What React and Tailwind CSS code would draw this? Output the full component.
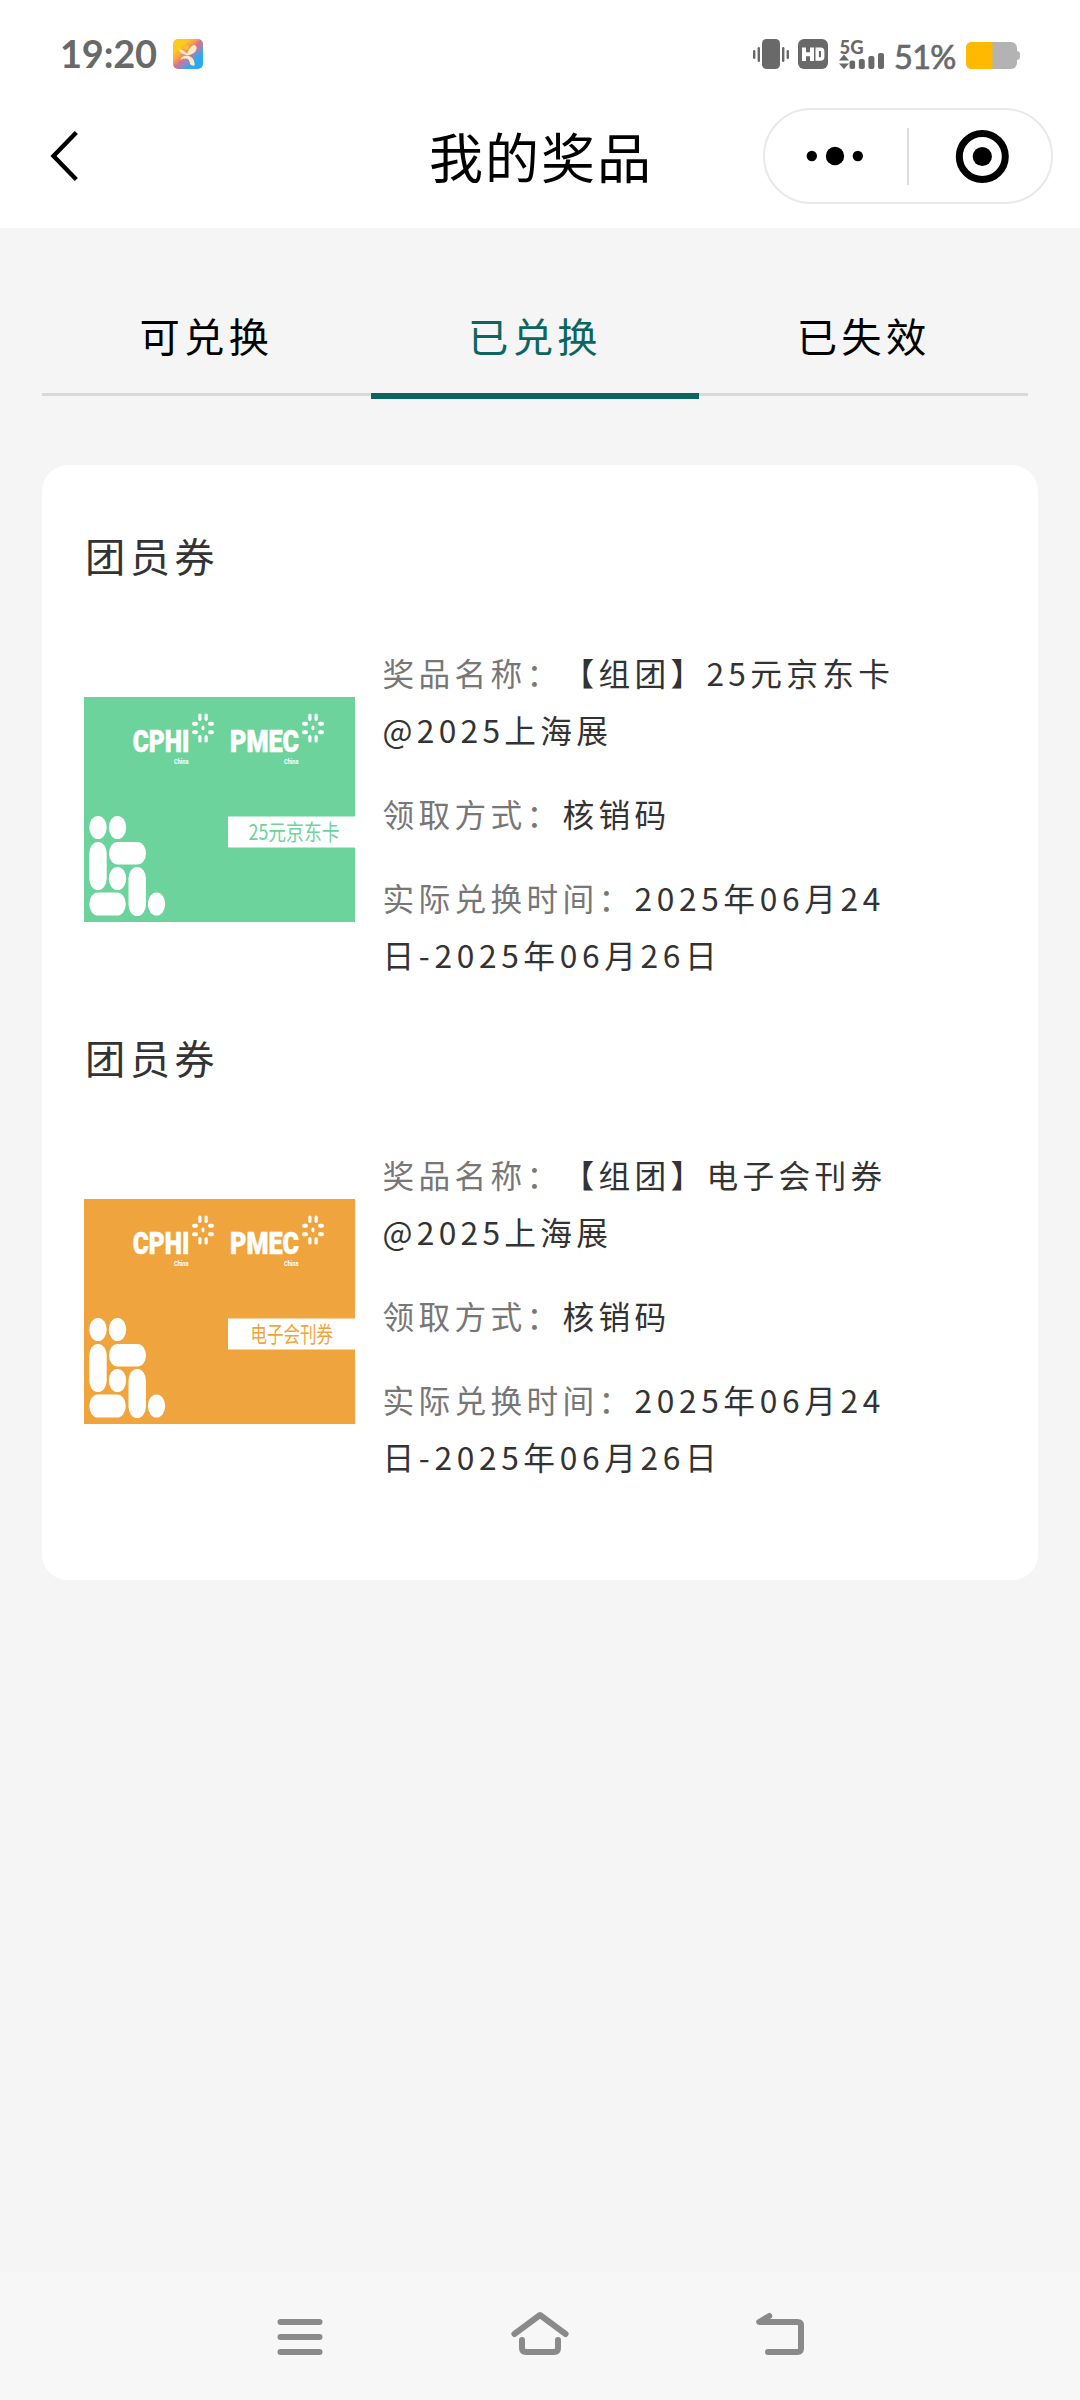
import React from 'react';

const tabs = [
  { key: 'available', label: '可兑换' },
  { key: 'redeemed', label: '已兑换' },
  { key: 'expired', label: '已失效' }
];

const prizes = [
  {
    title: '团员券',
    cover: '25元京东卡',
    color: '#6dd39c',
    coverX: 164.5,
    coverWidth: 91,
    name: '【组团】25元京东卡@2025上海展',
    method: '核销码',
    time: '2025年06月24日-2025年06月26日'
  },
  {
    title: '团员券',
    cover: '电子会刊券',
    color: '#efa43d',
    coverX: 166.5,
    coverWidth: 82.5,
    name: '【组团】电子会刊券@2025上海展',
    method: '核销码',
    time: '2025年06月24日-2025年06月26日'
  }
];

function StatusIcons() {
  return (
    <svg className="overflow-visible" width="132" height="32" viewBox="0 0 132 32" fill="#696969">
      {/* Vibrate */}
      <rect x="0" y="11" width="2.4" height="9" rx="1.2" />
      <rect x="4.6" y="8" width="2.4" height="15" rx="1.2" />
      <rect x="9" y="0" width="18" height="30" rx="4.5" />
      <rect x="29" y="8" width="2.4" height="15" rx="1.2" />
      <rect x="33.6" y="11" width="2.4" height="9" rx="1.2" />
      {/* HD */}
      <rect x="45" y="0" width="30" height="30" rx="6" />
      <path d="M51 8.5V22M59 8.5V22M51 15.2H59" stroke="#fff" strokeWidth="4" fill="none" />
      <path d="M64.2 10.2H67.5Q69.7 10.2 69.7 12.5V18Q69.7 20 67.5 20H64.2Z" stroke="#fff" strokeWidth="3.4" fill="none" />
      {/* 5G signal */}
      <text x="86.5" y="14.5" fontSize="19.5" fontWeight="900" textLength="24" lengthAdjust="spacingAndGlyphs" fontFamily="Lato, sans-serif">5G</text>
      <path d="M91 15.5L96 21.5H86ZM91 30L86 24.5H96Z" />
      <rect x="96.5" y="21.5" width="5.6" height="8.5" rx="2" />
      <rect x="105.8" y="20" width="6" height="10" rx="2" />
      <rect x="115.4" y="17" width="6" height="13" rx="2" />
      <rect x="125" y="14" width="6" height="16" rx="2" />
    </svg>
  );
}

function AppIcon() {
  return (
    <svg width="30" height="30" viewBox="0 0 30 30">
      <defs>
        <linearGradient id="app" x1="0" y1="0" x2="1" y2="1">
          <stop offset="0.25" stopColor="#fdc91c" />
          <stop offset="0.4" stopColor="#f79a4f" />
          <stop offset="0.5" stopColor="#d9708f" />
          <stop offset="0.62" stopColor="#8a8cc8" />
          <stop offset="0.74" stopColor="#2aaaf0" />
        </linearGradient>
      </defs>
      <rect width="30" height="30" rx="5" fill="url(#app)" />
      <path d="M6 10.5C9 10.500 11.500 12 14 14.5C15.5 11 17.5 7 21 6C24 6 24.5 10 22 13C19.5 15.5 16 16.5 13 16C9 15 6 13 6 10.5Z" fill="#fdebc4" />
      <circle cx="13.7" cy="8.500" r="2.4" fill="#fdba3c" />
      <path d="M7 20.5C9 17 14 15.5 17 17.5C20.5 19 21.5 22 21.8 26C20.5 27.5 17.5 26.5 17 24.5C16.5 21.5 15.5 20 13 19.5C11 19.5 9 20.5 7 20.5Z" fill="#fdebc4" />
    </svg>
  );
}

function StatusBar() {
  return (
    <div className="flex h-[96px] items-start justify-between px-[60px] text-[#696969]">
      <div className="flex items-start pt-[39px]">
        <span className="w-[113px] font-[Lato,sans-serif] text-[38px] leading-[29px] font-bold tracking-[-0.2px]">19:20</span>
        <AppIcon />
      </div>
      <div className="flex items-start pt-[39px]">
        <StatusIcons />
        <span className="ml-[9px] w-[72px] pt-[3px] font-[Lato,sans-serif] text-[32.5px] leading-[30px] tracking-[-0.7px] [-webkit-text-stroke:0.7px_#696969]">51%</span>
        <svg className="mt-[3px]" width="54" height="28" viewBox="0 0 54 28">
          <rect x="46" y="9" width="8" height="9" rx="3.5" fill="#b3b3b3" />
          <rect width="51" height="27" rx="6" fill="#b3b3b3" />
          <path d="M6 0H26.5V27H6Q0 27 0 21V6Q0 0 6 0Z" fill="#ffb900" />
        </svg>
      </div>
    </div>
  );
}

function NavBar() {
  return (
    <div className="flex h-[132px] items-start">
      <button className="mt-[34px] ml-[50px] w-[331px]">
        <svg width="30" height="52" viewBox="0 0 30 52" fill="none" stroke="#000" strokeWidth="4.4">
          <path d="M26.3 2.5L3.5 26L26.3 49.5" />
        </svg>
      </button>
      <h1 className="mt-[20px] w-[320px] text-center text-[54px] leading-[80px] tracking-[2px] text-black">我的奖品</h1>
      <div className="mt-[12px] ml-[62px] flex h-[96px] w-[290px] items-center rounded-full border-2 border-[#e9e9e9]">
        <svg width="286" height="92" viewBox="0 0 286 92">
          <circle cx="46.8" cy="46" r="5.2" />
          <circle cx="70" cy="46" r="9.2" />
          <circle cx="92.8" cy="46" r="5.2" />
          <rect x="142" y="18" width="2" height="57" fill="#dedede" />
          <circle cx="217.3" cy="46.5" r="23" fill="none" stroke="#000" strokeWidth="7" />
          <circle cx="217.3" cy="46.5" r="9.6" />
        </svg>
      </div>
    </div>
  );
}

function Burst({ x }) {
  return (
    <g transform={`translate(${x} 31)`} fill="#fff">
      <ellipse rx="1.6" ry="2.4" />
      {[-1, 1].map((sx) =>
        [-1, 1].map((sy) => (
          <React.Fragment key={`${sx}${sy}`}>
            <rect x={sx * 3.1 - 1.6} y={sy * 10.8 - 3.7} width="3.2" height="7.4" rx="1.6" />
            <rect x={sx * 8 - 3} y={sy * 4.2 - 2} width="6" height="4" rx="2" />
          </React.Fragment>
        ))
      )}
    </g>
  );
}

function PrizeCover({ prize }) {
  return (
    <svg className="mt-[53px] shrink-0 tracking-normal" width="271" height="225" viewBox="0 0 271 225">
      <rect width="271" height="225" fill={prize.color} />
      <g fill="#fff" fontFamily="Roboto, sans-serif">
        <g fontWeight="900" fontSize="31" stroke="#fff" strokeWidth="0.6">
          <text x="48.8" y="55" textLength="56.5" lengthAdjust="spacingAndGlyphs">CPHI</text>
          <text x="146" y="55" textLength="69" lengthAdjust="spacingAndGlyphs">PMEC</text>
        </g>
        <g fontWeight="700" fontSize="6.5">
          <text x="90" y="66.5" textLength="14.5" lengthAdjust="spacingAndGlyphs">China</text>
          <text x="200" y="66.5" textLength="14.5" lengthAdjust="spacingAndGlyphs">China</text>
        </g>
      </g>
      <Burst x={119} />
      <Burst x={229} />
      <rect x="144" y="119.5" width="127" height="31" fill="#fff" />
      <text
        x={prize.coverX}
        y="143"
        fontSize="22"
        textLength={prize.coverWidth}
        lengthAdjust="spacingAndGlyphs"
        fill={prize.color}
      >
        {prize.cover}
      </text>
      {/* Pill pattern */}
      <g fill="#fff">
        <ellipse cx="14" cy="130.5" rx="8.7" ry="11.5" />
        <ellipse cx="33.5" cy="130.5" rx="8.7" ry="11.5" />
        <rect x="5.3" y="145" width="17.4" height="48" rx="8.7" ry="11.5" />
        <rect x="25" y="145" width="37" height="22.5" rx="8.7" ry="11.2" />
        <ellipse cx="33.5" cy="181.5" rx="8.7" ry="11.5" />
        <rect x="44.5" y="170" width="17.4" height="49" rx="8.7" ry="11.5" />
        <rect x="5.3" y="195.5" width="36.5" height="23" rx="8.7" ry="11.5" />
        <ellipse cx="72.5" cy="207" rx="8.7" ry="11.5" />
      </g>
    </svg>
  );
}

function PrizeField({ label, children }) {
  return (
    <p className="mb-[27px] text-[#333]">
      <span className="text-[#777]">{label}：</span>
      {children}
    </p>
  );
}

function PrizeItem({ prize }) {
  return (
    <section className="h-[501.5px]">
      <h2 className="mb-[53px] pl-px text-[40.32px] leading-[72px] text-[#333]">{prize.title}</h2>
      <div className="flex items-start">
        <PrizeCover prize={prize} />
        <div className="ml-[27.5px] w-[525px] text-[31.68px] leading-[57px] break-all">
          <PrizeField label="奖品名称">{prize.name}</PrizeField>
          <PrizeField label="领取方式">{prize.method}</PrizeField>
          <PrizeField label="实际兑换时间">
            <span className="tracking-[4.65px]">{prize.time}</span>
          </PrizeField>
        </div>
      </div>
    </section>
  );
}

function SystemNav() {
  return (
    <footer className="flex h-[128px] items-start justify-between bg-[#f7f7f7] pt-[30px] pr-[274px] pl-[276px]">
      <svg width="48" height="56" viewBox="0 0 48 56" stroke="#8a8a8a" strokeWidth="6" strokeLinecap="round">
        <path d="M4.5 20H43.5M4.5 35H43.5M4.5 50H43.5" />
      </svg>
      <svg width="60" height="56" viewBox="0 0 60 56" fill="none" stroke="#8a8a8a" strokeWidth="6" strokeLinecap="round" strokeLinejoin="round">
        <path d="M4.4 32L30 13L55.6 32M12 38V46Q12 50 16 50H44Q48 50 48 46V38" />
      </svg>
      <svg width="50" height="56" viewBox="0 0 50 56" fill="none" stroke="#8a8a8a" strokeWidth="6" strokeLinecap="round" strokeLinejoin="round">
        <path d="M13.3 14L3.2 20H41.5Q45 20 45 23.5V46.5Q45 50 41.5 50H12" />
      </svg>
    </footer>
  );
}

function App() {
  const active = 'redeemed';

  return (
    <div className="flex h-[2400px] w-[1080px] flex-col bg-[#f5f5f5] font-['Noto_Sans_CJK_SC',sans-serif] [text-spacing-trim:space-all]">
      <header className="h-[228px] bg-white">
        <StatusBar />
        <NavBar />
      </header>

      <main className="flex-1 px-[42px] tracking-[4.32px]">
        <nav className="mt-[66px] flex w-[986px]">
          {tabs.map((tab) => (
            <div key={tab.key} className="h-[105px] flex-1">
              <div
                className={
                  tab.key === active
                    ? 'h-[105px] border-b-[6px] border-[#0a665f] text-center text-[40.32px] leading-[82px] text-[#0a665f]'
                    : 'h-[102px] border-b-[3px] border-[#d9d9d9] text-center text-[40.32px] leading-[82px] text-black'
                }
              >
                {tab.label}
              </div>
            </div>
          ))}
        </nav>

        <div className="mt-[66px] h-[1115px] rounded-[26px] bg-white px-[42px] pt-[54px]">
          {prizes.map((prize) => (
            <PrizeItem key={prize.cover} prize={prize} />
          ))}
        </div>
      </main>

      <SystemNav />
    </div>
  );
}

export default App;
